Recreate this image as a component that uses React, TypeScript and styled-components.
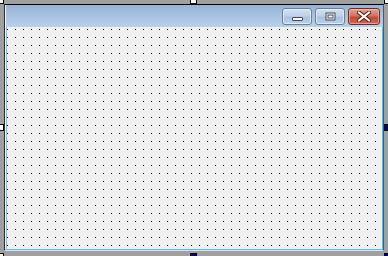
import styled, { createGlobalStyle } from 'styled-components';

const GlobalStyle = createGlobalStyle`
  html, body {
    margin: 0;
    padding: 0;
    background: #a0a0a0;
    font-family: "Liberation Sans", Arial, sans-serif;
  }
`;

const DesignSurface = styled.div`
  position: relative;
  width: 388px;
  height: 256px;
  overflow: hidden;
  background: #a0a0a0;
  padding: 4px 0 0 4px;
  box-sizing: border-box;
`;

const FormWindow = styled.div`
  width: 380px;
  height: 247px;
  box-sizing: border-box;
  display: flex;
  flex-direction: column;
  border-top: 1px solid #000;
  border-left: 1px solid #2b2b2b;
  border-right: 1px solid #4a5a6c;
  border-bottom: 1px solid #d8e6f2;
  background: #b9d1ea;
`;

const TitleBar = styled.div`
  height: 22px;
  flex: none;
  display: flex;
  justify-content: flex-end;
  align-items: flex-start;
  gap: 3px;
  padding: 3px 3px 0 0;
  box-sizing: border-box;
  border-left: 1px solid #f4f8fc;
  background: linear-gradient(to bottom, #98b3d3 0%, #a9c4e2 55%, #b8d0ea 100%);
`;

const CaptionButton = styled.div<{ $close?: boolean; $w: number }>`
  width: ${({ $w }) => $w}px;
  height: 17px;
  box-sizing: border-box;
  display: flex;
  align-items: center;
  justify-content: center;
  border-radius: 3px;
  border: 1px solid ${({ $close }) => ($close ? '#6e2b24' : '#6d7f98')};
  box-shadow: inset 0 0 0 1px ${({ $close }) => ($close ? 'rgba(255,200,190,0.55)' : 'rgba(235,243,252,0.75)')};
  background: ${({ $close }) =>
    $close
      ? 'linear-gradient(to bottom, #e3a394 0%, #d3725f 45%, #c24b33 55%, #cf6a4f 100%)'
      : 'linear-gradient(to bottom, #d2e0f0 0%, #bed2e9 45%, #aac3df 55%, #b9cfe8 100%)'};
`;

const ClientFrame = styled.div`
  flex: 1;
  display: flex;
  border-left: 1px solid #f4f8fc;
  border-bottom: 1px solid #5fb9e6;
  border-right: 1px solid #5fb9e6;
`;

const ClientArea = styled.div`
  flex: 1;
  border-left: 1px solid #8fb6dc;
  background-color: #f0f0f0;
  background-image: conic-gradient(from 270deg at 1px 1px, #000 90deg, transparent 0);
  background-size: 8px 8px;
  background-position: 0 2px;
`;

const Handle = styled.div<{ $filled?: boolean }>`
  position: absolute;
  width: 7px;
  height: 7px;
  box-sizing: border-box;
  border: 1px solid #000;
  background: ${({ $filled }) => ($filled ? '#000080' : '#fff')};
`;

const MinimizeGlyph = () => (
  <svg width="13" height="6" viewBox="0 0 13 6" style={{ marginTop: 5 }}>
    <rect x="1.5" y="1.5" width="10" height="3" rx="0.5" fill="#fff" stroke="#3b4a5e" />
  </svg>
);

const MaximizeGlyph = () => (
  <svg width="11" height="9" viewBox="0 0 11 9">
    <rect x="1" y="1" width="9" height="7" fill="#fff" stroke="#3b4a5e" />
    <rect x="3" y="3" width="5" height="3" fill="none" stroke="#3b4a5e" />
  </svg>
);

const CloseGlyph = () => (
  <svg width="14" height="11" viewBox="0 0 14 11">
    <path d="M2 1.5 L12 9.5 M12 1.5 L2 9.5" stroke="#4a1c16" strokeWidth="4" strokeLinecap="square" />
    <path d="M2 1.5 L12 9.5 M12 1.5 L2 9.5" stroke="#fff" strokeWidth="2" strokeLinecap="square" />
  </svg>
);

const handles = [
  { left: -3, top: -3, filled: false },
  { left: 190, top: -3, filled: false },
  { left: 384, top: -3, filled: false },
  { left: -3, top: 124, filled: false },
  { left: 384, top: 124, filled: true },
  { left: -3, top: 253, filled: false },
  { left: 190, top: 253, filled: true },
  { left: 384, top: 253, filled: true },
];

const App = () => {
  return (
    <>
      <GlobalStyle />
      <DesignSurface>
        <FormWindow>
          <TitleBar>
            <CaptionButton $w={30}>
              <MinimizeGlyph />
            </CaptionButton>
            <CaptionButton $w={30}>
              <MaximizeGlyph />
            </CaptionButton>
            <CaptionButton $w={32} $close>
              <CloseGlyph />
            </CaptionButton>
          </TitleBar>
          <ClientFrame>
            <ClientArea />
          </ClientFrame>
        </FormWindow>
        {handles.map((h, i) => (
          <Handle key={i} $filled={h.filled} style={{ left: h.left, top: h.top }} />
        ))}
      </DesignSurface>
    </>
  );
};

export default App;
